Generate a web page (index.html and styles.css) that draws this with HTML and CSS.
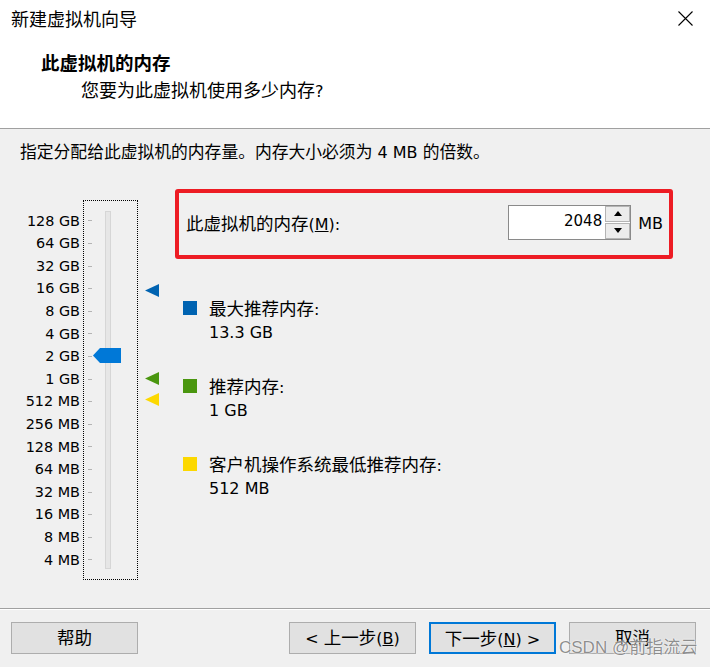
FILE: index.html
```html
<!DOCTYPE html>
<html lang="zh-CN">
<head>
<meta charset="utf-8">
<title>新建虚拟机向导</title>
<link rel="stylesheet" href="styles.css">
</head>
<body>
<div class="win">
  <header class="head">
    <div class="titlebar">
      <span class="title">新建虚拟机向导</span>
      <svg class="close" width="15" height="15" viewBox="0 0 15 15"><path d="M0.5 0.5L14.5 14.5M14.5 0.5L0.5 14.5" stroke="#000" stroke-width="1.1" fill="none"/></svg>
    </div>
    <h1 class="head-title">此虚拟机的内存</h1>
    <p class="head-sub"><span class="z">您要为此虚拟机使用多少内存</span>?</p>
  </header>

  <main class="main">
    <p class="desc"><span class="z">指定分配给此虚拟机的内存量。内存大小必须为</span> 4 MB <span class="z">的倍数。</span></p>

    <div class="content">
      <div class="slider">
        <ol class="scale">
          <li>128 GB</li><li>64 GB</li><li>32 GB</li><li>16 GB</li>
          <li>8 GB</li><li>4 GB</li><li>2 GB</li><li>1 GB</li>
          <li>512 MB</li><li>256 MB</li><li>128 MB</li><li>64 MB</li>
          <li>32 MB</li><li>16 MB</li><li>8 MB</li><li>4 MB</li>
        </ol>
        <div class="track-box">
          <ol class="ticks">
            <li></li><li></li><li></li><li></li><li></li><li></li><li></li><li></li>
            <li></li><li></li><li></li><li></li><li></li><li></li><li></li><li></li>
          </ol>
          <div class="track"></div>
          <svg class="thumb" width="28" height="15" viewBox="0 0 28 15"><polygon points="0,7.5 7,0 28,0 28,15 7,15" fill="#0078d7"/></svg>
        </div>
        <div class="marks">
          <svg class="mark" style="top:84px" width="14" height="13" viewBox="0 0 14 13"><polygon points="0,6.5 14,0 14,13" fill="#0063b1"/></svg>
          <svg class="mark" style="top:172px" width="14" height="13" viewBox="0 0 14 13"><polygon points="0,6.5 14,0 14,13" fill="#4a960f"/></svg>
          <svg class="mark" style="top:193px" width="14" height="13" viewBox="0 0 14 13"><polygon points="0,6.5 14,0 14,13" fill="#fcd800"/></svg>
        </div>
      </div>

      <div class="panel">
        <div class="mem-box">
          <span class="mem-label"><span class="z">此虚拟机的内存</span>(<u>M</u>):</span>
          <div class="spin">
            <div class="spin-val">2048</div>
            <div class="spin-btns">
              <span class="spin-btn"><svg width="8" height="5" viewBox="0 0 8 5"><polygon points="0,5 4,0 8,5" fill="#000"/></svg></span>
              <span class="spin-btn"><svg width="8" height="5" viewBox="0 0 8 5"><polygon points="0,0 8,0 4,5" fill="#000"/></svg></span>
            </div>
          </div>
          <span class="unit">MB</span>
        </div>

        <ul class="legend">
          <li class="legend-item">
            <i class="sw sw-blue"></i>
            <div><div class="lg-name"><span class="z">最大推荐内存</span>:</div><div class="lg-val">13.3 GB</div></div>
          </li>
          <li class="legend-item">
            <i class="sw sw-green"></i>
            <div><div class="lg-name"><span class="z">推荐内存</span>:</div><div class="lg-val">1 GB</div></div>
          </li>
          <li class="legend-item">
            <i class="sw sw-yellow"></i>
            <div><div class="lg-name"><span class="z">客户机操作系统最低推荐内存</span>:</div><div class="lg-val">512 MB</div></div>
          </li>
        </ul>
      </div>
    </div>
  </main>

  <footer class="foot">
    <button class="btn"><span class="z">帮助</span></button>
    <div class="spacer"></div>
    <button class="btn">&lt; <span class="z">上一步</span>(<u>B</u>)</button>
    <button class="btn btn-primary"><span class="z">下一步</span>(<u>N</u>) &gt;</button>
    <button class="btn"><span class="z">取消</span></button>
  </footer>

  <div class="watermark">CSDN @前指流云</div>
</div>
</body>
</html>
```

FILE: styles.css
```css
* {
  box-sizing: border-box;
  margin: 0;
  padding: 0;
}

html,
body {
  width: 710px;
  height: 667px;
  overflow: hidden;
}

body {
  font-family: "DejaVu Sans", "Noto Sans CJK SC", sans-serif;
  font-size: 16px;
  color: #000;
  background: #f0f0f0;
}

.z {
  font-family: "Noto Sans CJK SC", sans-serif;
  font-size: 17.5px;
}

.win {
  position: relative;
  height: 667px;
  display: flex;
  flex-direction: column;
}

/* header */
.head {
  height: 129px;
  background: #fff;
  border-bottom: 1px solid #a0a0a0;
}

.titlebar {
  height: 36px;
  display: flex;
  align-items: center;
  justify-content: space-between;
  padding: 0 17px 0 11px;
}

.title {
  font-family: "Noto Sans CJK SC", sans-serif;
  font-size: 18px;
  line-height: 24px;
}

.close {
  display: block;
}

.head-title {
  margin-top: 14px;
  padding-left: 41px;
  font-family: "Noto Sans CJK SC", sans-serif;
  font-size: 18.5px;
  font-weight: 700;
  line-height: 24px;
}

.head-sub {
  margin-top: 3px;
  padding-left: 81px;
  line-height: 24px;
}

.head-sub .z {
  font-size: 18px;
}

/* main */
.main {
  flex: 1;
  padding: 9.7px 0 0 20px;
}

.desc {
  line-height: 24px;
}

.desc .z {
  font-size: 16.8px;
}

.content {
  display: flex;
  align-items: flex-start;
  margin-top: 24.3px;
}

/* slider */
.slider {
  display: flex;
  margin-top: 11px;
}

.scale {
  list-style: none;
  width: 60px;
  padding-top: 9.7px;
  font-size: 14.4px;
  text-align: right;
}

.scale li {
  height: 22.6px;
  line-height: 22.6px;
}

.track-box {
  position: relative;
  display: flex;
  margin-left: 3px;
  width: 55px;
  height: 380px;
  border: 1px dotted #000;
}

.ticks {
  list-style: none;
  width: 21px;
  padding: 8.7px 0 0 4px;
}

.ticks li {
  height: 22.6px;
  display: flex;
  align-items: center;
}

.ticks li::before {
  content: "";
  width: 4px;
  height: 1px;
  background: #b4b4b4;
}

.track {
  width: 6px;
  height: 358px;
  margin-top: 9.7px;
  background: #e6e6e6;
  border: 1px solid #d6d6d6;
}

.thumb {
  position: absolute;
  left: 9px;
  top: 147px;
  display: block;
}

.marks {
  position: relative;
  width: 14px;
  height: 380px;
  margin-left: 7px;
}

.mark {
  position: absolute;
  left: 0;
  display: block;
}

/* right panel */
.panel {
  width: 498px;
  margin-left: 16px;
}

.mem-box {
  height: 70px;
  display: flex;
  align-items: center;
  padding: 0 6px 0 7px;
  border: 4px solid #ed1c24;
  border-radius: 3px;
}

.mem-label {
  line-height: 24px;
}

.spin {
  display: flex;
  margin-left: auto;
  margin-top: -3px;
  width: 123px;
  height: 35px;
  background: #fff;
  border: 1px solid #8a8a8a;
}

.spin-val {
  flex: 1;
  text-align: right;
  padding-right: 3px;
  font-size: 15px;
  line-height: 31px;
}

.spin-btns {
  width: 25px;
  display: flex;
  flex-direction: column;
  gap: 1px;
}

.spin-btn {
  flex: 1;
  display: flex;
  align-items: center;
  justify-content: center;
  background: #ececec;
  border: 1px solid #b4b4b4;
}

.spin-btn svg {
  display: block;
}

.unit {
  margin-left: 7px;
  line-height: 24px;
}

.legend {
  list-style: none;
  margin-top: 36.6px;
  padding-left: 8px;
}

.legend-item {
  display: grid;
  grid-template-columns: 14px auto;
  column-gap: 12px;
  line-height: 23px;
  margin-bottom: 30px;
}

.sw {
  display: block;
  width: 14px;
  height: 14px;
  margin-top: 5px;
}

.sw-blue {
  background: #0063b1;
}

.sw-green {
  background: #4a960f;
}

.sw-yellow {
  background: #fcd800;
}

/* footer */
.foot {
  height: 59px;
  display: flex;
  align-items: flex-start;
  gap: 13px;
  padding: 13.3px 14px 0 11px;
  border-top: 1px solid #a0a0a0;
  box-shadow: inset 0 1px #fff;
}

.spacer {
  flex: 1;
}

.btn {
  width: 127px;
  height: 32px;
  background: #e1e1e1;
  border: 1px solid #adadad;
  font-family: "DejaVu Sans", "Noto Sans CJK SC", sans-serif;
  font-size: 16px;
  line-height: 28px;
  color: #000;
  text-align: center;
}

.btn-primary {
  border: 2px solid #0078d7;
}

.watermark {
  position: absolute;
  left: 559px;
  top: 637px;
  font-family: "Liberation Sans", "Noto Sans CJK SC", sans-serif;
  font-size: 17px;
  line-height: 22px;
  color: rgba(105, 105, 105, 0.75);
  text-shadow: 0 0 2px #fff, 0 0 1px #fff;
  white-space: nowrap;
}
```
